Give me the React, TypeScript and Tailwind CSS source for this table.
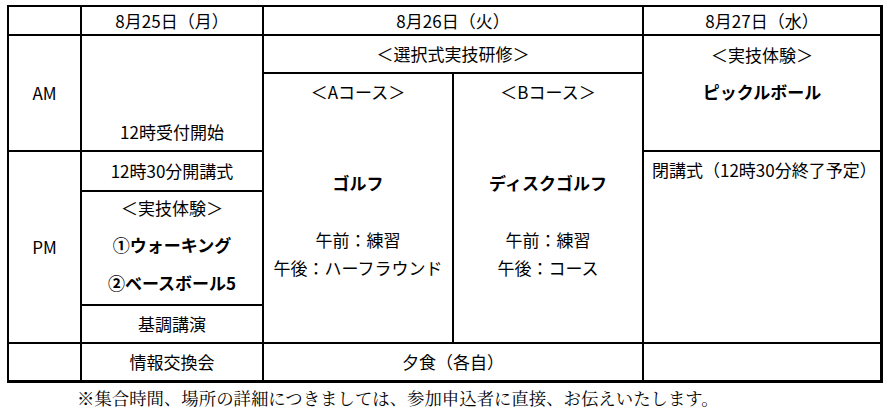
const jp = "font-['Noto_Sans_CJK_JP','Noto_Sans',sans-serif]";

const Cell = ({ className = "", children }: { className?: string; children?: React.ReactNode }) => (
  <div className={`bg-white flex flex-col items-center ${className}`}>{children}</div>
);

const App = () => {
  return (
    <div className={`min-h-screen w-[887px] h-[418px] bg-white text-black ${jp}`}>
      <div className="pt-[5px] pl-[7px]">
        <div className="grid w-[876px] grid-cols-[71px_180px_188px_188px_236px] grid-rows-[27px_36px_76px_38px_112px_36px_36px] gap-[2px] bg-black pt-[2px] pl-[2px] pr-[3px] pb-[3px] text-[17px] leading-[20px]">
          {/* header */}
          <Cell className="col-start-1 row-start-1" />
          <Cell className="col-start-2 row-start-1 justify-center">8月25日（月）</Cell>
          <Cell className="col-start-3 col-span-2 row-start-1 justify-center">8月26日（火）</Cell>
          <Cell className="col-start-5 row-start-1 justify-center">8月27日（水）</Cell>

          {/* AM */}
          <Cell className="col-start-1 row-start-2 row-span-2 justify-center">AM</Cell>
          <Cell className="col-start-2 row-start-2 row-span-2 justify-end pb-[8px]">12時受付開始</Cell>
          <Cell className="col-start-3 col-span-2 row-start-2 justify-center">＜選択式実技研修＞</Cell>
          <Cell className="col-start-5 row-start-2 row-span-2 pt-[9px]">
            <span>＜実技体験＞</span>
            <span className="mt-[17px] font-bold">ピックルボール</span>
          </Cell>

          {/* courses */}
          <Cell className="col-start-3 row-start-3 row-span-4 pt-[8px]">
            <span>＜Aコース＞</span>
            <span className="mt-[71px] font-bold">ゴルフ</span>
            <span className="mt-[37px]">午前：練習</span>
            <span className="mt-[8px]">午後：ハーフラウンド</span>
          </Cell>
          <Cell className="col-start-4 row-start-3 row-span-4 pt-[8px]">
            <span>＜Bコース＞</span>
            <span className="mt-[71px] font-bold">ディスクゴルフ</span>
            <span className="mt-[37px]">午前：練習</span>
            <span className="mt-[8px]">午後：コース</span>
          </Cell>

          {/* PM */}
          <Cell className="col-start-1 row-start-4 row-span-3 justify-center">PM</Cell>
          <Cell className="col-start-2 row-start-4 justify-center">12時30分開講式</Cell>
          <Cell className="col-start-5 row-start-4 row-span-3 items-start pt-[8px] pl-[8px]">
            閉講式（12時30分終了予定）
          </Cell>
          <Cell className="col-start-2 row-start-5 pt-[6px]">
            <span>＜実技体験＞</span>
            <span className="mt-[17px] font-bold">①ウォーキング</span>
            <span className="mt-[18px] font-bold">②ベースボール5</span>
          </Cell>
          <Cell className="col-start-2 row-start-6 justify-center">基調講演</Cell>

          {/* evening */}
          <Cell className="col-start-1 row-start-7" />
          <Cell className="col-start-2 row-start-7 justify-center">情報交換会</Cell>
          <Cell className="col-start-3 col-span-2 row-start-7 justify-center">夕食（各自）</Cell>
          <Cell className="col-start-5 row-start-7" />
        </div>
        <p className="mt-[5px] pl-[70px] text-[17.4px] leading-[20px] font-['Noto_Serif_CJK_JP','Noto_Sans_CJK_JP',serif]">
          ※集合時間、場所の詳細につきましては、参加申込者に直接、お伝えいたします。
        </p>
      </div>
    </div>
  );
};

export default App;
